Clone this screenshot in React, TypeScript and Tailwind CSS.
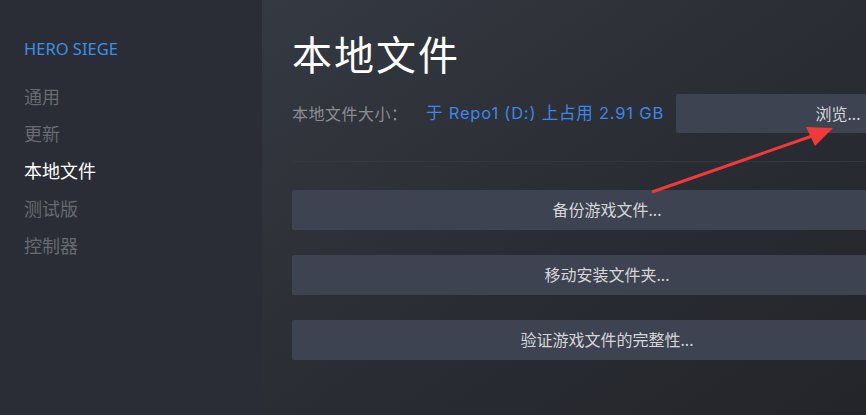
import React from 'react'

const navItems = [
  { label: '通用', active: false },
  { label: '更新', active: false },
  { label: '本地文件', active: true },
  { label: '测试版', active: false },
  { label: '控制器', active: false },
]

const actions = ['备份游戏文件...', '移动安装文件夹...', '验证游戏文件的完整性...']

export default function App() {
  return (
    <div
      className="relative flex h-[415px] w-[866px] overflow-hidden"
      style={{ fontFamily: '"Noto Sans", "Noto Sans CJK SC", sans-serif' }}
    >
      {/* Sidebar */}
      <aside className="flex w-[262px] shrink-0 flex-col bg-[#2a2d35] pl-6 pt-[36px]">
        <div className="text-[16.5px] leading-[26px] text-[#3d8fe6]">HERO SIEGE</div>
        <nav className="mt-[17px] flex flex-col">
          {navItems.map((item) => (
            <div
              key={item.label}
              className={`h-[37.2px] text-[18px] leading-[37.2px] ${
                item.active ? 'text-white' : 'text-[#676a71]'
              }`}
            >
              {item.label}
            </div>
          ))}
        </nav>
      </aside>

      {/* Main */}
      <main className="flex min-w-0 flex-1 flex-col bg-gradient-to-br from-[#353941] via-[#2a2d34] to-[#23252a] pl-[30px] pt-[29px]">
        <h1 className="h-[52px] text-[40px] leading-[52px] tracking-[2px] text-white">本地文件</h1>

        <div className="mt-[13px] flex h-[39px] w-[708px] shrink-0 items-center">
          <span className="w-[134px] text-[16px] tracking-[0.5px] text-[#8a8d93]">本地文件大小：</span>
          <span className="text-[16.5px] tracking-[0.8px] text-[#3f86e8]" style={{ fontFamily: 'Inter, "Noto Sans CJK SC", sans-serif' }}>
            于 Repo1 (D:) 上占用 2.91 GB
          </span>
          <button className="ml-auto h-[39px] w-[324px] rounded-[2px] bg-[#3d4350] text-center text-[16px] text-[#d4d6da]">
            浏览...
          </button>
        </div>

        <div className="mt-[28px] h-px w-[640px] bg-[#353840]" />

        <div className="mt-[28px] flex w-[630px] flex-col gap-[25px]">
          {actions.map((a) => (
            <button
              key={a}
              className="h-[40px] w-[630px] rounded-[2px] bg-[#3d4350] text-center text-[16px] text-[#d4d6da]"
            >
              {a}
            </button>
          ))}
        </div>
      </main>

      {/* Annotation arrow */}
      <svg className="pointer-events-none absolute left-0 top-0" width="866" height="415">
        <line x1="652" y1="192" x2="815" y2="135" stroke="#f03a3a" strokeWidth="3" />
        <polygon points="833,128 806,127 815,146" fill="#f03a3a" />
      </svg>
    </div>
  )
}
